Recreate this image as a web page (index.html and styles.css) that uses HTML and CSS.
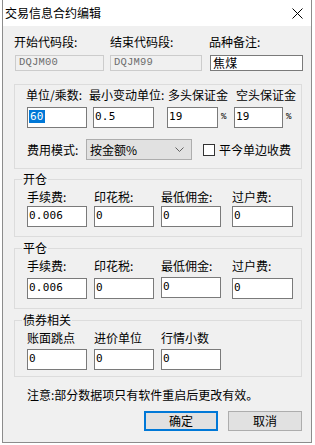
FILE: index.html
```html
<!DOCTYPE html>
<html lang="zh">
<head>
<meta charset="utf-8">
<title>交易信息合约编辑</title>
<link rel="stylesheet" href="styles.css">
</head>
<body>
<div class="window">
  <div class="titlebar">
    <span class="title">交易信息合约编辑</span>
    <svg class="close" width="11" height="11" viewBox="0 0 11 11"><path d="M0.5 0.5 L10.5 10.5 M10.5 0.5 L0.5 10.5" stroke="#000" stroke-width="1" fill="none"/></svg>
  </div>
  <div class="body">
    <div class="top-grid">
      <span class="lbl">开始代码段:</span>
      <span class="lbl">结束代码段:</span>
      <span class="lbl">品种备注:</span>
      <div class="field disabled w89 nudge">DQJM00</div>
      <div class="field disabled w92">DQJM99</div>
      <div class="field w93 nudge cjk">焦煤</div>
    </div>

    <div class="group">
      <div class="unit-labels">
        <span class="lbl u1">单位/乘数:</span>
        <span class="lbl u2">最小变动单位:</span>
        <span class="lbl u3">多头保证金</span>
        <span class="lbl">空头保证金</span>
      </div>
      <div class="unit-fields">
        <div class="field tall w60"><span class="sel">60</span></div>
        <div class="field tall w61">0.5</div>
        <div class="pct-cell"><div class="field tall w51">19</div><span class="pct">%</span></div>
        <div class="pct-cell"><div class="field tall w49">19</div><span class="pct">%</span></div>
      </div>
      <div class="mode-row">
        <span class="lbl mode-lbl">费用模式:</span>
        <div class="select"><span>按金额%</span><svg width="9" height="5" viewBox="0 0 9 5"><path d="M0.5 0.5 L4.5 4.5 L8.5 0.5" stroke="#606060" fill="none"/></svg></div>
        <span class="check"></span>
        <span class="lbl">平今单边收费</span>
      </div>
    </div>

    <fieldset class="fs fs-open">
      <legend>开仓</legend>
      <div class="quad lbls">
        <span class="lbl">手续费:</span><span class="lbl">印花税:</span><span class="lbl">最低佣金:</span><span class="lbl">过户费:</span>
      </div>
      <div class="quad inputs gap2">
        <div class="field tall w60">0.006</div><div class="field tall w60">0</div><div class="field tall w60">0</div><div class="field tall w61">0</div>
      </div>
    </fieldset>

    <fieldset class="fs fs-close">
      <legend>平仓</legend>
      <div class="quad lbls">
        <span class="lbl">手续费:</span><span class="lbl">印花税:</span><span class="lbl">最低佣金:</span><span class="lbl">过户费:</span>
      </div>
      <div class="quad inputs gap5">
        <div class="field tall w60">0.006</div><div class="field tall w60">0</div><div class="field tall w60 raised">0</div><div class="field tall w61">0</div>
      </div>
    </fieldset>

    <fieldset class="fs fs-bond">
      <legend>债券相关</legend>
      <div class="quad lbls">
        <span class="lbl">账面跳点</span><span class="lbl">进价单位</span><span class="lbl">行情小数</span>
      </div>
      <div class="quad inputs gap4">
        <div class="field tall w60">0</div><div class="field tall w60">0</div><div class="field tall w60">0</div>
      </div>
    </fieldset>

    <p class="note">注意:部分数据项只有软件重启后更改有效。</p>

    <div class="buttons">
      <button class="btn default">确定</button>
      <button class="btn">取消</button>
    </div>
  </div>
</div>
</body>
</html>
```
FILE: styles.css
```css
* { box-sizing: border-box; }
html, body { margin: 0; padding: 0; }
body {
  background: #ffffff;
  width: 315px;
  height: 445px;
  overflow: hidden;
  font-family: "Noto Sans CJK SC", "Noto Sans", sans-serif;
  font-size: 12px;
  color: #000;
}
.window {
  margin-left: 2px;
  width: 310px;
  height: 443px;
  border: 1px solid #8c8c8c;
  border-top: none;
  background: #f0f0f0;
  display: flex;
  flex-direction: column;
}
.titlebar {
  height: 26px;
  background: #ffffff;
  display: flex;
  align-items: center;
  justify-content: space-between;
  padding: 0 8px 0 2px;
}
.title { font-size: 12px; line-height: 14px; }
.close { margin-top: 1px; }
.body {
  flex: 1;
  padding: 9px 9px 0 11px;
}
.lbl { line-height: 14px; white-space: nowrap; }

.top-grid {
  display: grid;
  grid-template-columns: 96px 99px 93px;
  row-gap: 6px;
}
.field {
  height: 21px;
  background: #fff;
  border: 1px solid #7a7a7a;
  font-family: "DejaVu Sans Mono", monospace;
  font-size: 11px;
  line-height: 18px;
  padding-left: 1px;
  letter-spacing: 0.2px;
}
.top-grid .field { height: 16px; line-height: 13px; }
.field.disabled {
  background: #f0f0f0;
  border-color: #cccccc;
  color: #6d6d6d;
  font-family: "Liberation Mono", monospace;
  font-size: 10.5px;
  padding-left: 3px;
}
.field.cjk { font-family: "Noto Sans CJK SC", sans-serif; font-size: 12px; padding-left: 2px; }
.nudge { margin-left: 1px; }
.w89 { width: 89px; } .w92 { width: 92px; } .w93 { width: 93px; }
.w60 { width: 60px; } .w61 { width: 61px; } .w51 { width: 51px; } .w49 { width: 49px; }
.sel { background: #0078d7; color: #fff; padding: 0 1px; }

.group {
  margin-top: 13px;
  width: 288px;
  border: 1px solid #dcdcdc;
  padding: 3px 0 8px 12px;
}
.unit-labels { display: flex; margin-left: -1px; }
.u1 { width: 63px; } .u2 { width: 79px; } .u3 { width: 68px; }
.unit-fields {
  margin-top: 5px;
  display: grid;
  grid-template-columns: 66px 74px 67px auto;
}
.pct-cell { display: flex; align-items: center; }
.pct { font-family: "Liberation Mono", monospace; font-size: 9px; margin-left: 3px; margin-top: -2px; }
.mode-row {
  margin-top: 11px;
  height: 21px;
  display: flex;
  align-items: center;
}
.mode-lbl { width: 59px; }
.select {
  width: 106px;
  height: 21px;
  background: #e1e1e1;
  border: 1px solid #adadad;
  display: flex;
  align-items: center;
  justify-content: space-between;
  padding: 0 7px 0 3px;
}
.check {
  width: 12px;
  height: 12px;
  margin-left: 11px;
  margin-right: 4px;
  background: #fff;
  border: 1px solid #333;
}

.fs {
  margin: 3px 0 0;
  width: 288px;
  min-width: 0;
  border: 1px solid #dcdcdc;
  padding: 4px 0 9px 12px;
}
.fs legend {
  margin-left: -5px;
  padding: 0 1px;
  line-height: 14px;
  font-size: 12px;
}
.fs-close, .fs-bond { margin-top: 4px; }
.fs-bond { padding-bottom: 6px; }
.quad {
  display: grid;
  grid-template-columns: 67px 67px 71px 61px;
}
.quad.lbls { margin-left: 0; }
.gap2 { margin-top: 2px; }
.gap5 { margin-top: 5px; }
.gap4 { margin-top: 4px; }
.raised { margin-top: -1px; }

.note {
  margin: 11px 0 0 13px;
  line-height: 14px;
}
.buttons {
  margin-top: 9px;
  width: 288px;
  display: flex;
  justify-content: flex-end;
  gap: 10px;
}
.btn {
  width: 74px;
  height: 20px;
  background: #e1e1e1;
  border: 1px solid #adadad;
  font-family: "Noto Sans CJK SC", sans-serif;
  font-size: 12px;
  line-height: 14px;
  padding: 0;
  color: #000;
}
.btn.default { border: 2px solid #0078d7; }
```
